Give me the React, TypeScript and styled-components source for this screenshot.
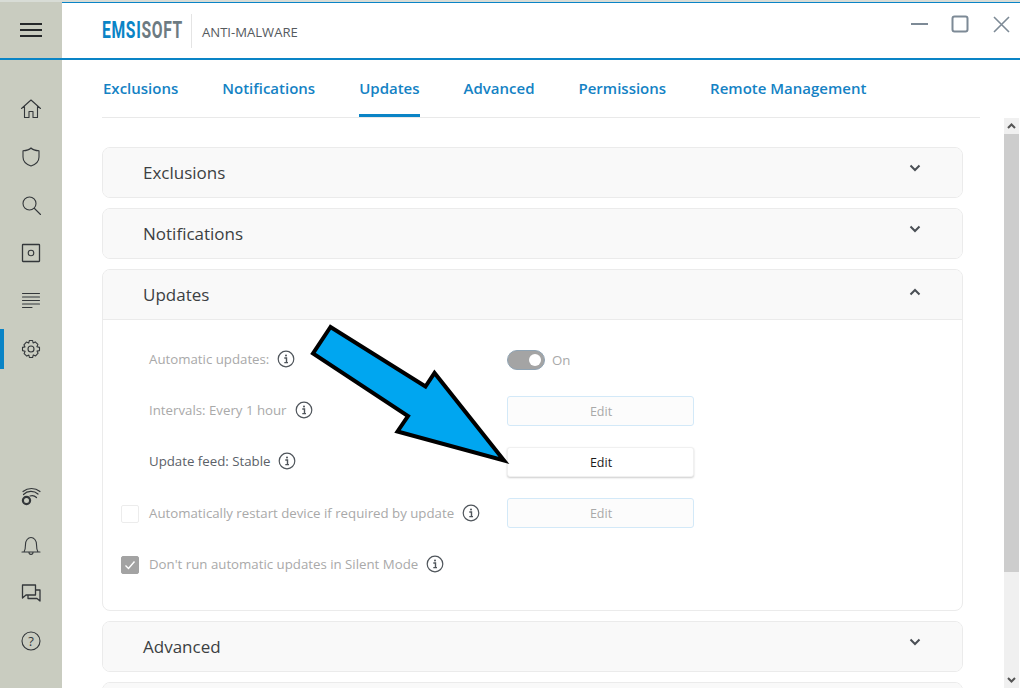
import React, { ReactElement, ReactNode } from 'react'
import styled, { createGlobalStyle } from 'styled-components';

const GlobalStyle = createGlobalStyle`
  html, body { margin: 0; padding: 0; background: #fff; }
  body { font-family: "Open Sans", "Noto Sans", "Liberation Sans", sans-serif; }
  * { box-sizing: border-box; }
`;

const Window = styled.div`
  position: relative;
  width: 1020px;
  height: 688px;
  overflow: hidden;
  display: flex;
  flex-direction: column;
  background: #fff;
`;

const TopEdge = styled.div`
  height: 3px;
  flex: none;
  background: linear-gradient(#d8dcd6 0 2px, #0a84c6 2px 3px);
`;

const Header = styled.header`
  height: 58px;
  flex: none;
  display: flex;
  align-items: stretch;
  border-bottom: 2px solid #0a84c6;
  margin-top: -1px;
`;

const MenuCell = styled.div`
  width: 62px;
  flex: none;
  background: #c9ccc0;
  display: flex;
  align-items: center;
  justify-content: center;
`;

const Brand = styled.div`
  display: flex;
  align-items: center;
  margin-left: 40px;
  padding-top: 2px;
`;

const Logo = styled.div`
  width: 80px;
  font-family: "Roboto", sans-serif;
  font-weight: 700;
  font-size: 23px;
  line-height: 30px;
  letter-spacing: 1px;
  color: #6d7b82;
  white-space: nowrap;
  transform: scaleX(0.68);
  transform-origin: left center;
`;

const LogoAccent = styled.span`
  color: #0a84c6;
`;

const BrandDivider = styled.div`
  width: 1px;
  height: 34px;
  background: #e4e4e4;
  margin: 0 10px 0 9px;
`;

const Product = styled.div`
  font-size: 13.1px;
  color: #555a5e;
  padding-top: 1px;
  white-space: nowrap;
`;

const WindowButtons = styled.div`
  margin-left: auto;
  display: flex;
  align-items: flex-start;
  gap: 23px;
  padding: 13px 10px 0 0;
`;

const Body = styled.div`
  flex: 1;
  min-height: 0;
  display: flex;
`;

const Sidebar = styled.nav`
  width: 62px;
  flex: none;
  background: #c9ccc0;
  display: flex;
  flex-direction: column;
  padding-top: 29px;
`;

const NavGroup = styled.div`
  display: flex;
  flex-direction: column;
  gap: 8px;
`;

const BottomNavGroup = styled(NavGroup)`
  margin-top: 108px;
`;

const NavItem = styled.div<{ $active?: boolean }>`
  height: 40px;
  display: flex;
  align-items: center;
  justify-content: center;
  border-left: 4px solid ${p => (p.$active ? '#0a84c6' : 'transparent')};
  padding-right: 4px;
`;

const Content = styled.main`
  flex: 1;
  min-width: 0;
  padding: 0 24px 0 40px;
  overflow: hidden;
`;

const Tabs = styled.div`
  display: flex;
  gap: 44px;
  height: 58px;
  border-bottom: 1px solid #e9e9e9;
  padding-left: 1px;
`;

const Tab = styled.div<{ $active?: boolean }>`
  height: 57px;
  padding-top: 16px;
  font-size: 15px;
  font-weight: 600;
  line-height: 24px;
  color: #1482c4;
  white-space: nowrap;
  border-bottom: 3px solid ${p => (p.$active ? '#0a84c6' : 'transparent')};
`;

const Cards = styled.div`
  display: flex;
  flex-direction: column;
  gap: 10px;
  padding: 29px 17px 0 0;
`;

const Card = styled.section`
  flex: none;
  border: 1px solid #ebebeb;
  border-radius: 8px;
  overflow: hidden;
  background: #fff;
`;

const CardHead = styled.div<{ $open?: boolean }>`
  height: ${p => (p.$open ? '50px' : '49px')};
  display: flex;
  align-items: center;
  justify-content: space-between;
  padding: 0 41px 0 40px;
  background: #f9f9f9;
  font-size: 17px;
  color: #3c3f42;
  border-bottom: ${p => (p.$open ? '1px solid #ebebeb' : 'none')};
`;

const ChevronBox = styled.span<{ $up?: boolean }>`
  display: flex;
  margin-top: ${p => (p.$up ? '-6px' : '-10px')};
`;

const CardBody = styled.div`
  height: 290px;
  padding-top: 15px;
  display: flex;
  flex-direction: column;
`;

const Row = styled.div<{ $indent?: boolean }>`
  height: 51px;
  flex: none;
  display: flex;
  align-items: center;
  padding-left: ${p => (p.$indent ? '46px' : '18px')};
  padding-bottom: ${p => (p.$indent ? '2px' : '0')};
  position: relative;
`;

const RowLabel = styled.div<{ $enabled?: boolean }>`
  display: flex;
  align-items: center;
  gap: 8px;
  padding-bottom: 2px;
  font-size: 13.25px;
  white-space: nowrap;
  color: ${p => (p.$enabled ? '#5b6168' : '#a9a9a9')};
`;

const Check = styled.div<{ $on?: boolean }>`
  width: 18px;
  height: 18px;
  flex: none;
  margin-right: 10px;
  border-radius: 2px;
  border: 1px solid ${p => (p.$on ? '#a3a3a3' : '#ececec')};
  background: ${p => (p.$on ? '#a3a3a3' : '#fff')};
  display: flex;
  align-items: center;
  justify-content: center;
`;

const Control = styled.div`
  position: absolute;
  left: 404px;
  top: 0;
  bottom: 1px;
  display: flex;
  align-items: center;
`;

const Toggle = styled.div`
  width: 38px;
  height: 20px;
  border-radius: 10px;
  background: #a4a4a4;
  border: 1px solid #8fa3b3;
  display: flex;
  align-items: center;
  justify-content: flex-end;
  padding-right: 3px;
`;

const Knob = styled.div`
  width: 12px;
  height: 12px;
  border-radius: 50%;
  background: #fff;
`;

const ToggleText = styled.span`
  font-size: 13.25px;
  color: #a9a9a9;
  margin-left: 7px;
`;

const EditButton = styled.div<{ $enabled?: boolean }>`
  width: 187px;
  height: 30px;
  display: flex;
  align-items: center;
  justify-content: center;
  border-radius: 3px;
  font-size: 12.5px;
  padding: 1px 0 0 1px;
  color: ${p => (p.$enabled ? '#1c1c1c' : '#a9a9a9')};
  background: ${p => (p.$enabled ? '#fff' : '#fcfcfc')};
  border: 1px solid ${p => (p.$enabled ? '#f0f0f0' : '#d3e9f8')};
  box-shadow: ${p => (p.$enabled ? '0 1px 2px rgba(0,0,0,0.2)' : 'none')};
`;

const Scrollbar = styled.div`
  width: 15px;
  flex: none;
  margin: 58px 1px 0 0;
  background: #f0f0f0;
  display: flex;
  flex-direction: column;
  justify-content: space-between;
  align-items: center;
`;

const ScrollArrow = styled.div`
  height: 16px;
  display: flex;
  align-items: center;
  justify-content: center;
`;

const ScrollTop = styled.div`
  width: 100%;
  display: flex;
  flex-direction: column;
  align-items: center;
`;

const Thumb = styled.div`
  width: 100%;
  height: 438px;
  background: #cdcdcd;
`;

const ArrowOverlay = styled.svg`
  position: absolute;
  left: 0;
  top: 0;
  pointer-events: none;
`;

function Line({ children, size = 22 }: { children: ReactNode; size?: number }): ReactElement {
  return (
    <svg width={size} height={size} viewBox="0 0 22 22" fill="none" stroke="#33373a" strokeWidth="1.1" strokeLinecap="round" strokeLinejoin="round">
      {children}
    </svg>
  );
}

const navTop: ReactNode[] = [
  <path d="M1.5 10.5 11 2 20.5 10.5M4.5 8.5V19.5H9V13.5H13V19.5H17.5V8.5" />,
  <path d="M11 2C9.5 3.6 6.5 4.6 3 4.8V11C3 15.5 6.5 18.5 11 20C15.5 18.5 19 15.5 19 11V4.8C15.5 4.6 12.5 3.6 11 2Z" />,
  <><circle cx="9.5" cy="9.5" r="6.5" /><path d="M14.5 14.5 20.5 20.5" /></>,
  <><rect x="2.5" y="2.5" width="17" height="17" rx="0.5" strokeWidth="1.3" /><circle cx="11" cy="11" r="2.8" /></>,
  <path d="M2.5 3.5H19.5M2.5 7H19.5M2.5 10.5H19.5M2.5 14H19.5M2.5 17.5H12" />,
  <>
    <circle cx="11" cy="11" r="3" />
    <path d="M9.4 2.5H12.6L13.1 5 15.2 3.9 17.9 6.4 16.9 8.7 19.5 9.4V12.6L17 13.1 18.1 15.2 15.6 17.9 13.3 16.9 12.6 19.5H9.4L8.9 17 6.8 18.1 4.1 15.6 5.1 13.3 2.5 12.6V9.4L5 8.9 3.9 6.8 6.4 4.1 8.7 5.1Z" />
  </>,
];

const navBottom: ReactNode[] = [
  <>
    <circle cx="6.5" cy="14.5" r="3.6" strokeWidth="2.2" />
    <path d="M3.5 8.5C7.5 4.5 14 4.5 18 8M3 5.5C8 1.5 15 1.5 20 5.5M10 10C12.5 9 15 10 16.5 11.5" strokeWidth="1.2" />
  </>,
  <path d="M2 18H20M4 18C5.5 15.5 5.5 13 5.5 10.5C5.5 6.5 8 3.5 11 3.5C14 3.5 16.5 6.5 16.5 10.5C16.5 13 16.5 15.5 18 18M9 18.5C9 21 13 21 13 18.5" />,
  <path d="M2.5 3H15.5V13H6L2.5 16ZM15.5 8H20V19L17 16.5H8V13" strokeWidth="1.3" />,
  <circle cx="11" cy="11" r="9" />,
];

const InfoIcon = (): ReactElement => (
  <svg width="18" height="18" viewBox="0 0 18 18" fill="none">
    <circle cx="9" cy="9" r="7.8" stroke="#4f555b" strokeWidth="1.2" />
    <path d="M7.3 8H9.5V12.4M7.3 12.6H11" stroke="#4f555b" strokeWidth="1.4" />
    <circle cx="9" cy="5.4" r="1" fill="#4f555b" />
  </svg>
);

const Chevron = ({ up }: { up?: boolean }): ReactElement => (
  <ChevronBox $up={up}>
    <svg width="12" height="8" viewBox="0 0 12 8" fill="none" stroke="#4a4f55" strokeWidth="2">
      <path d={up ? 'M1.5 6.5 6 2 10.5 6.5' : 'M1.5 1.5 6 6 10.5 1.5'} />
    </svg>
  </ChevronBox>
);

const tabs = ['Exclusions', 'Notifications', 'Updates', 'Advanced', 'Permissions', 'Remote Management'];

interface CollapsedProps {
  title: string
}

const Collapsed = ({ title }: CollapsedProps): ReactElement => (
  <Card>
    <CardHead>
      {title}
      <Chevron />
    </CardHead>
  </Card>
);

export default function App(): ReactElement {
  return (
    <Window>
      <GlobalStyle />
      <TopEdge />
      <Header>
        <MenuCell>
          <svg width="22" height="16" viewBox="0 0 22 16" stroke="#25282a" strokeWidth="2">
            <path d="M0 2H22M0 8H22M0 14H22" />
          </svg>
        </MenuCell>
        <Brand>
          <Logo><LogoAccent>EMSI</LogoAccent>SOFT</Logo>
          <BrandDivider />
          <Product>ANTI-MALWARE</Product>
        </Brand>
        <WindowButtons>
          <svg width="18" height="18" viewBox="0 0 18 18" stroke="#7d8a96" strokeWidth="2" fill="none">
            <path d="M1 9H18" />
          </svg>
          <svg width="18" height="18" viewBox="0 0 18 18" stroke="#7d8a96" strokeWidth="2" fill="none">
            <rect x="1.5" y="1.5" width="15" height="15" rx="2" />
          </svg>
          <svg width="18" height="18" viewBox="0 0 18 18" stroke="#7d8a96" strokeWidth="1.6" fill="none">
            <path d="M2 2 17 17M17 2 2 17" />
          </svg>
        </WindowButtons>
      </Header>
      <Body>
        <Sidebar>
          <NavGroup>
            {React.Children.toArray(navTop.map((icon, i) => (
              <NavItem $active={i === 5}><Line>{icon}</Line></NavItem>
            )))}
          </NavGroup>
          <BottomNavGroup>
            {React.Children.toArray(navBottom.map((icon, i) => (
              <NavItem>
                <Line>
                  {icon}
                  {i === 3 && <text x="11" y="15.5" textAnchor="middle" fontSize="13" fill="#33373a" stroke="none" fontFamily="Open Sans">?</text>}
                </Line>
              </NavItem>
            )))}
          </BottomNavGroup>
        </Sidebar>
        <Content>
          <Tabs>
            {React.Children.toArray(tabs.map(t => <Tab $active={t === 'Updates'}>{t}</Tab>))}
          </Tabs>
          <Cards>
            <Collapsed title="Exclusions" />
            <Collapsed title="Notifications" />
            <Card>
              <CardHead $open>
                Updates
                <Chevron up />
              </CardHead>
              <CardBody>
                <Row $indent>
                  <RowLabel>Automatic updates: <InfoIcon /></RowLabel>
                  <Control>
                    <Toggle><Knob /></Toggle>
                    <ToggleText>On</ToggleText>
                  </Control>
                </Row>
                <Row $indent>
                  <RowLabel>Intervals: Every 1 hour <InfoIcon /></RowLabel>
                  <Control><EditButton>Edit</EditButton></Control>
                </Row>
                <Row $indent>
                  <RowLabel $enabled>Update feed: Stable <InfoIcon /></RowLabel>
                  <Control><EditButton $enabled>Edit</EditButton></Control>
                </Row>
                <Row>
                  <Check />
                  <RowLabel>Automatically restart device if required by update <InfoIcon /></RowLabel>
                  <Control><EditButton>Edit</EditButton></Control>
                </Row>
                <Row>
                  <Check $on>
                    <svg width="12" height="10" viewBox="0 0 12 10" fill="none" stroke="#fff" strokeWidth="1.4">
                      <path d="M1.5 5.5 4.5 8.5 10.5 1.5" />
                    </svg>
                  </Check>
                  <RowLabel>Don't run automatic updates in Silent Mode <InfoIcon /></RowLabel>
                </Row>
              </CardBody>
            </Card>
            <Collapsed title="Advanced" />
            <Collapsed title="" />
          </Cards>
        </Content>
        <Scrollbar>
          <ScrollTop>
            <ScrollArrow>
              <svg width="9" height="6" viewBox="0 0 9 6" fill="none" stroke="#555" strokeWidth="2"><path d="M1 5 4.5 1.5 8 5" /></svg>
            </ScrollArrow>
            <Thumb />
          </ScrollTop>
          <ScrollArrow>
            <svg width="9" height="6" viewBox="0 0 9 6" fill="none" stroke="#555" strokeWidth="2"><path d="M1 1 4.5 4.5 8 1" /></svg>
          </ScrollArrow>
        </Scrollbar>
      </Body>
      <ArrowOverlay width="1020" height="688" viewBox="0 0 1020 688">
        <polygon
          points="330.5,327 313,353.5 408,416 397.5,431.5 504,460.5 434.5,373 425.5,386.5"
          fill="#00a6f0"
          stroke="#000"
          strokeWidth="4"
          strokeLinejoin="miter"
        />
      </ArrowOverlay>
    </Window>
  )
}
